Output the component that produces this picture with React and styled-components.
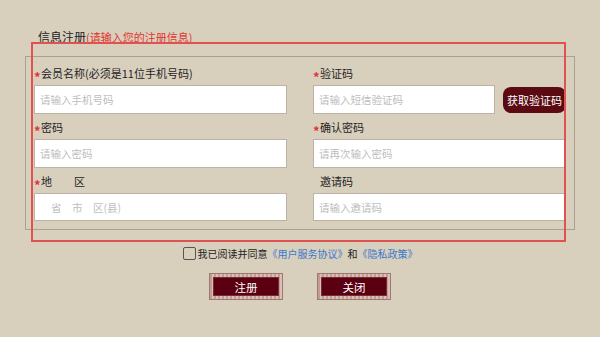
import React from 'react'
import styled, { createGlobalStyle } from 'styled-components'

const GlobalStyle = createGlobalStyle`
  html, body {
    margin: 0;
    padding: 0;
    background: #d8cfbd;
  }
  body {
    font-family: "Noto Sans CJK SC", "Noto Sans", sans-serif;
    color: #222;
  }
  * { box-sizing: border-box; }
`

const Page = styled.div`
  width: 600px;
  height: 337px;
  padding: 28px 25px 0 25px;
  display: flex;
  flex-direction: column;
`

const TitleRow = styled.div`
  padding-left: 13px;
  display: flex;
  align-items: baseline;
  height: 18px;
  line-height: 18px;
`

const Title = styled.span`
  font-size: 12px;
  color: #1e1e1e;
`

const SubTitle = styled.span`
  font-size: 11px;
  color: #e2352f;
  text-decoration: underline;
`

const FormArea = styled.div`
  position: relative;
  margin-top: 10px;
`

const Fieldset = styled.div`
  border: 1px solid #a9a293;
  padding: 9px 8px 8px 8px;
  display: grid;
  grid-template-columns: 253px 253px;
  column-gap: 26px;
  row-gap: 6px;
`

const Highlight = styled.div`
  position: absolute;
  top: -14px;
  left: 6px;
  right: 9px;
  bottom: -12px;
  border: 2px solid #e05252;
  pointer-events: none;
`

const Field = styled.div`
  display: flex;
  flex-direction: column;
  gap: 5px;
`

const Label = styled.div`
  font-size: 11px;
  line-height: 14px;
  height: 14px;
  display: flex;
  align-items: center;
  color: #1f1f1f;
`

const Star = styled.span`
  color: #e0343a;
  width: 7px;
  font-size: 13px;
  font-weight: bold;
  line-height: 13px;
  padding-top: 7px;
  visibility: ${p => (p.$hidden ? 'hidden' : 'visible')};
`

const InputRow = styled.div`
  display: flex;
  align-items: center;
  gap: 8px;
  & > input {
    flex: 1;
    min-width: 0;
  }
`

const Input = styled.input`
  display: block;
  width: 100%;
  height: ${p => p.$h || 29}px;
  flex-shrink: 0;
  border: 1px solid #bbb3a3;
  background: #fff;
  padding: 0 0 0 ${p => p.$indent || 5}px;
  font-family: inherit;
  font-size: 10.5px;
  outline: none;
  &::placeholder {
    color: #bdbdbd;
  }
`

const CodeButton = styled.button`
  width: 63px;
  height: 26px;
  border: none;
  border-radius: 8px;
  background: #5b0a12;
  color: #fff;
  font-family: inherit;
  font-size: 11px;
  padding: 0;
`

const AgreeRow = styled.div`
  margin-top: 16px;
  display: flex;
  align-items: center;
  justify-content: center;
  font-size: 10px;
  height: 14px;
`

const CheckBox = styled.span`
  width: 13px;
  height: 13px;
  border: 1px solid #555;
  border-radius: 2px;
  margin-right: 2px;
`

const Link = styled.span`
  color: #3b78d0;
`

const Buttons = styled.div`
  margin-top: 13px;
  display: flex;
  justify-content: center;
  gap: 34px;
`

const FrameButton = styled.div`
  width: 74px;
  height: 27px;
  padding: 3px;
  border: 1px solid #a0786f;
  background: repeating-linear-gradient(90deg, #bf9c94 0 2px, #d6c0b8 2px 4px);
  display: flex;
`

const FrameInner = styled.div`
  flex: 1;
  background: #5a0010;
  border: 1px solid #7b2b33;
  color: #fff;
  font-size: 11.5px;
  display: flex;
  align-items: center;
  justify-content: center;
`

function App() {
  return (
    <Page>
      <GlobalStyle />
      <TitleRow>
        <Title>信息注册</Title>
        <SubTitle>(请输入您的注册信息)</SubTitle>
      </TitleRow>
      <FormArea>
        <Fieldset>
          <Field>
            <Label><Star>*</Star>会员名称(必须是11位手机号码)</Label>
            <Input placeholder="请输入手机号码" />
          </Field>
          <Field>
            <Label><Star>*</Star>验证码</Label>
            <InputRow>
              <Input placeholder="请输入短信验证码" />
              <CodeButton>获取验证码</CodeButton>
            </InputRow>
          </Field>
          <Field>
            <Label><Star>*</Star>密码</Label>
            <Input placeholder="请输入密码" />
          </Field>
          <Field>
            <Label><Star>*</Star>确认密码</Label>
            <Input placeholder="请再次输入密码" />
          </Field>
          <Field>
            <Label><Star>*</Star>地　　区</Label>
            <Input placeholder="省　市　区(县)" $indent={16} $h={28} />
          </Field>
          <Field>
            <Label><Star $hidden>*</Star>邀请码</Label>
            <Input placeholder="请输入邀请码" $h={28} />
          </Field>
        </Fieldset>
        <Highlight />
      </FormArea>
      <AgreeRow>
        <CheckBox />
        我已阅读并同意
        <Link>《用户服务协议》</Link>
        和
        <Link>《隐私政策》</Link>
      </AgreeRow>
      <Buttons>
        <FrameButton><FrameInner>注册</FrameInner></FrameButton>
        <FrameButton><FrameInner>关闭</FrameInner></FrameButton>
      </Buttons>
    </Page>
  )
}

export default App
